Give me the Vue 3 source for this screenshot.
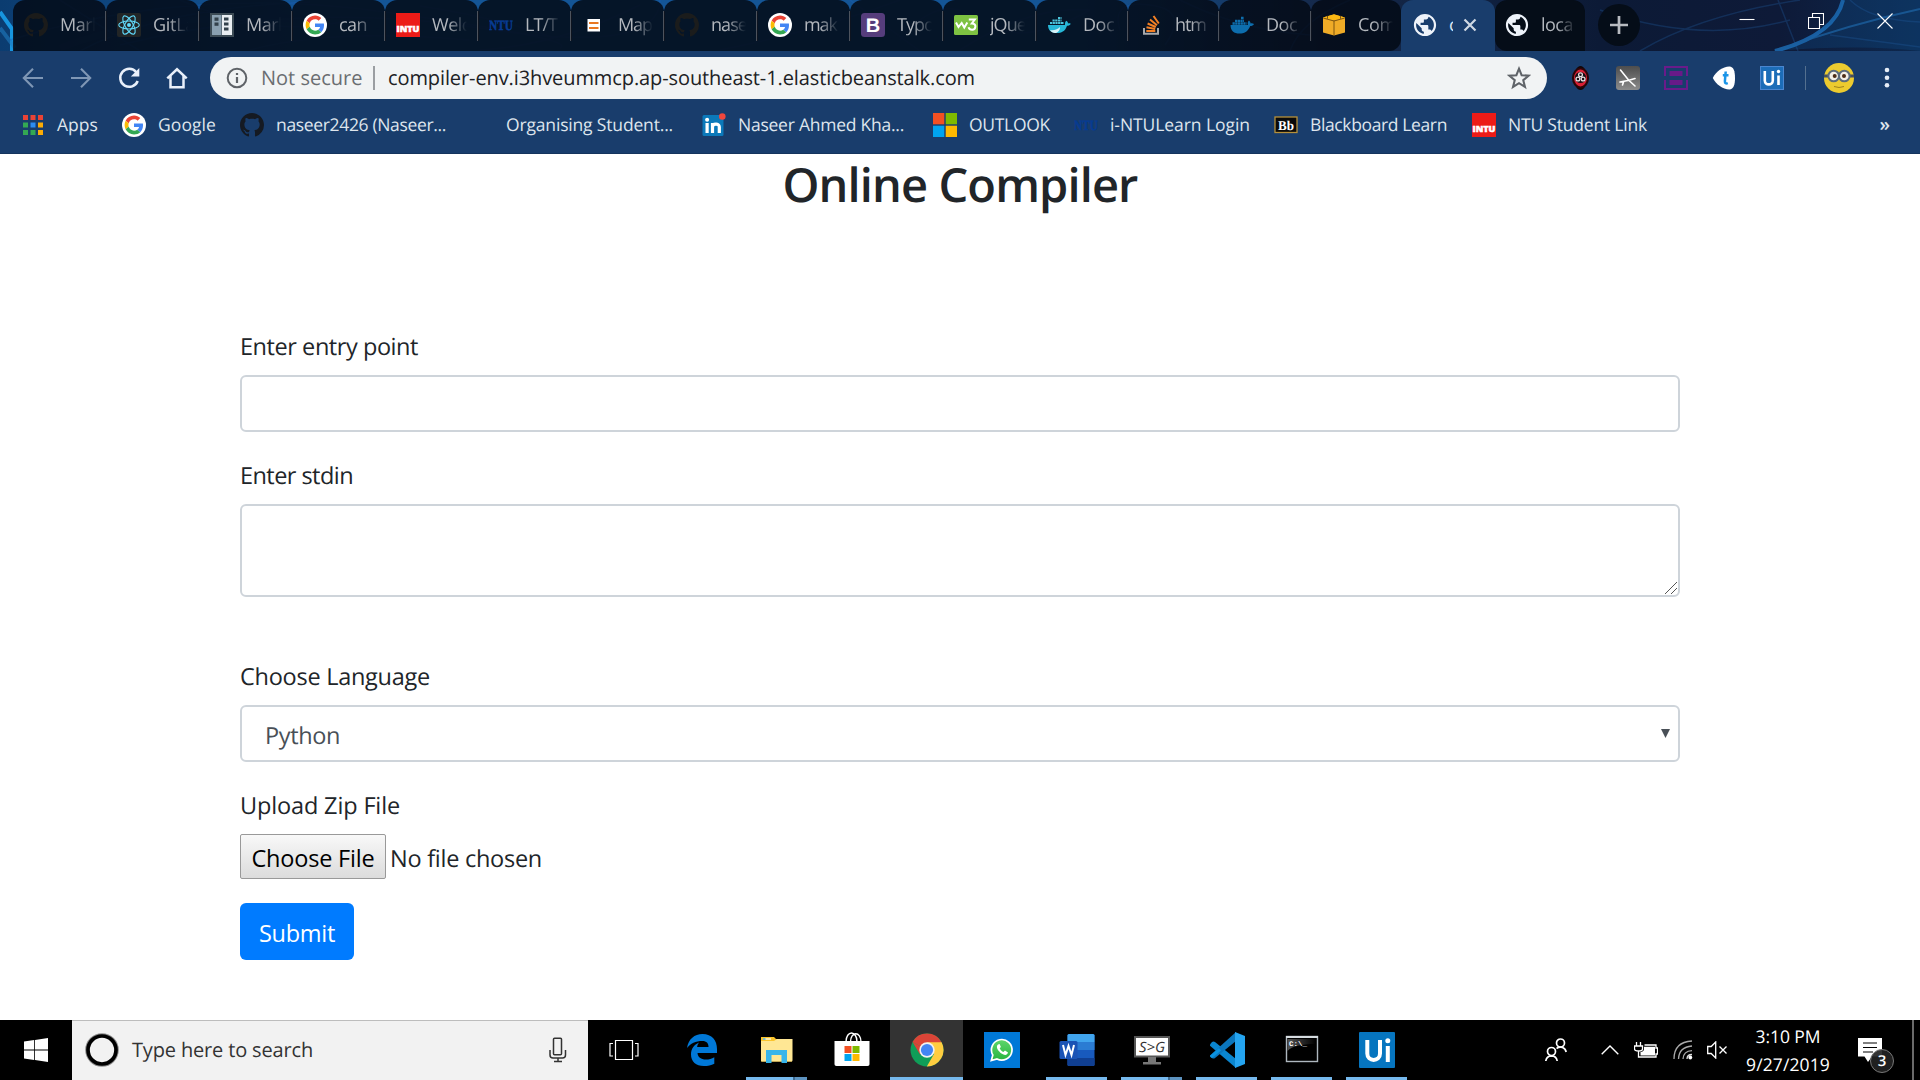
<script setup>
// v-fit adjusts letter spacing so that a run of text spans the given width
const vFit = {
  mounted(el, { value }) {
    if (!value) return
    const natural = el.getBoundingClientRect().width
    el.style.letterSpacing = (value - natural) / el.textContent.length + 'px'
  },
}

// lettering that sits on top of some icons
const lettering = {
  ntured: { text: 'INTU', x: 0.5, y: 18.5, textLength: 23, 'font-weight': 800, 'font-size': 8.5, fill: '#fff', stroke: '#fff', 'stroke-width': 0.5 },
  ntu: { text: 'NTU', x: 0, y: 16.7, textLength: 24, 'font-family': 'Liberation Serif, serif', 'font-weight': 700, 'font-size': 14, fill: '#073b91', stroke: '#073b91', 'stroke-width': 0.5 },
  bootstrap: { text: 'B', x: 4.8, y: 18.8, textLength: 14.5, 'font-family': 'Liberation Sans, sans-serif', 'font-weight': 700, 'font-size': 19.5, fill: '#fff' },
  bb: { text: 'Bb', x: 4, y: 16.5, textLength: 16, 'font-family': 'Liberation Serif, serif', 'font-weight': 700, 'font-size': 13.5, fill: '#fff' },
  sg: { text: 'S>G', x: 5, y: 20, textLength: 26, 'font-style': 'italic', 'font-size': 14, fill: '#333' },
  cmd: { text: 'C:\\_', x: 5, y: 13.5, textLength: 18, 'font-family': 'Liberation Mono, monospace', 'font-weight': 700, 'font-size': 7, fill: '#fff' },
}
const letterAttrs = (icon) => {
  const { text, ...attrs } = lettering[icon]
  return attrs
}

const tabs = [
  { icon: 'github', text: 'Mark', w: 93, fit: 41 },
  { icon: 'react', text: 'GitLa', w: 93, fit: 42 },
  { icon: 'panel', text: 'Mark', w: 93, fit: 41 },
  { icon: 'google', text: 'can', w: 93, fit: 28 },
  { icon: 'ntured', text: 'Welc', w: 93, fit: 38 },
  { icon: 'ntu', text: 'LT/T', w: 93, fit: 32 },
  { icon: 'map', text: 'Map', w: 93, fit: 34 },
  { icon: 'github', text: 'nase', w: 93, fit: 36 },
  { icon: 'google', text: 'mak', w: 93, fit: 33 },
  { icon: 'bootstrap', text: 'Typo', w: 93, fit: 37 },
  { icon: 'w3', text: 'jQue', w: 93, fit: 36 },
  { icon: 'docker', text: 'Doc', w: 92, fit: 31 },
  { icon: 'stack', text: 'htm', w: 91, fit: 31 },
  { icon: 'dockerflat', text: 'Doc', w: 92, fit: 31 },
  { icon: 'aws', text: 'Com', w: 90, fit: 38 },
]

const bookmarks = [
  { icon: 'apps', text: 'Apps', w: 101, fit: 41 },
  { icon: 'google', text: 'Google', w: 118, fit: 58 },
  { icon: 'github', text: 'naseer2426 (Naseer...', w: 230, fit: 170 },
  { icon: '', text: 'Organising Student...', w: 232, fit: 167 },
  { icon: 'linkedin', text: 'Naseer Ahmed Kha...', w: 231, fit: 166 },
  { icon: 'microsoft', text: 'OUTLOOK', w: 141, fit: 81 },
  { icon: 'ntu', text: 'i-NTULearn Login', w: 200, fit: 140 },
  { icon: 'bb', text: 'Blackboard Learn', w: 198, fit: 137 },
  { icon: 'ntured', text: 'NTU Student Link', w: 200, fit: 139 },
]

const extensions = ['ladybug', 'plane', 'frames', 'tee', 'uipath']

const pinned = [
  { icon: 'taskview', state: '' },
  { icon: 'edge', state: '' },
  { icon: 'explorer', state: 'open multi' },
  { icon: 'store', state: '' },
  { icon: 'chrome', state: 'open current' },
  { icon: 'whatsapp', state: '' },
  { icon: 'word', state: 'open' },
  { icon: 'sg', state: 'open multi' },
  { icon: 'vscode', state: 'open' },
  { icon: 'cmd', state: 'open' },
  { icon: 'uitask', state: 'open' },
]
</script>

<template>
  <div class="screen">
    <svg class="defs" aria-hidden="true">
      <defs>
        <linearGradient id="gGrey" x1="0" y1="0" x2="0" y2="1"><stop offset="0" stop-color="#4d4d4d" /><stop offset="1" stop-color="#8c8c8c" /></linearGradient>
        <linearGradient id="gGreen" x1="0" y1="0" x2="0" y2="1"><stop offset="0" stop-color="#5fd66c" /><stop offset="1" stop-color="#27b43f" /></linearGradient>
        <linearGradient id="gCmd" x1="0" y1="0" x2="1" y2="0"><stop offset="0" stop-color="#555" /><stop offset="1" stop-color="#000" /></linearGradient>
      </defs>
      <symbol id="github" viewBox="0 0 16 16"><path fill="#151a22" fill-rule="evenodd" d="M8 0C3.58 0 0 3.58 0 8c0 3.54 2.29 6.53 5.47 7.59.4.07.55-.17.55-.38 0-.19-.01-.82-.01-1.49-2.01.37-2.53-.49-2.69-.94-.09-.23-.48-.94-.82-1.13-.28-.15-.68-.52-.01-.53.63-.01 1.08.58 1.23.82.72 1.21 1.87.87 2.33.66.07-.52.28-.87.51-1.07-1.78-.2-3.64-.89-3.64-3.95 0-.87.31-1.59.82-2.15-.08-.2-.36-1.02.08-2.12 0 0 .67-.21 2.2.82.64-.18 1.32-.27 2-.27s1.36.09 2 .27c1.53-1.04 2.2-.82 2.2-.82.44 1.1.16 1.92.08 2.12.51.56.82 1.27.82 2.15 0 3.07-1.87 3.75-3.65 3.95.29.25.54.73.54 1.48 0 1.07-.01 1.93-.01 2.2 0 .21.15.46.55.38A8.01 8.01 0 0 0 16 8c0-4.42-3.58-8-8-8z" /></symbol>
      <symbol id="google" viewBox="0 0 24 24">
        <circle cx="12" cy="12" r="12" fill="#fff" />
        <g transform="translate(2.6 2.6) scale(.392)">
          <path fill="#ea4335" d="M24 9.5c3.54 0 6.71 1.22 9.21 3.6l6.85-6.85C35.9 2.38 30.47 0 24 0 14.62 0 6.51 5.38 2.56 13.22l7.98 6.19C12.43 13.72 17.74 9.5 24 9.5z" />
          <path fill="#4285f4" d="M46.98 24.55c0-1.57-.15-3.09-.38-4.55H24v9.02h12.94c-.58 2.96-2.26 5.48-4.78 7.18l7.73 6c4.51-4.18 7.09-10.36 7.09-17.65z" />
          <path fill="#fbbc05" d="M10.53 28.59c-.48-1.45-.76-2.99-.76-4.59s.27-3.14.76-4.59l-7.98-6.19C.92 16.46 0 20.12 0 24s.92 7.54 2.56 10.78z" />
          <path fill="#34a853" d="M24 48c6.48 0 11.93-2.13 15.89-5.81l-7.73-6c-2.15 1.45-4.92 2.3-8.16 2.3-6.26 0-11.57-4.22-13.47-9.91l-7.98 6.19C6.51 42.62 14.62 48 24 48z" />
        </g>
      </symbol>
      <symbol id="react" viewBox="0 0 24 24">
        <rect width="24" height="24" rx="2" fill="#222526" />
        <g fill="none" stroke="#61dafb" stroke-width="1.1"><ellipse cx="12" cy="12" rx="10.3" ry="4" /><ellipse cx="12" cy="12" rx="10.3" ry="4" transform="rotate(60 12 12)" /><ellipse cx="12" cy="12" rx="10.3" ry="4" transform="rotate(120 12 12)" /></g>
        <circle cx="12" cy="12" r="2" fill="#61dafb" />
      </symbol>
      <symbol id="panel" viewBox="0 0 24 24">
        <rect width="24" height="24" fill="#3c4b55" /><rect x="2" y="2" width="9.5" height="20" fill="#8aa0b0" /><rect x="12" y="2" width="10" height="20" fill="#e9eef2" />
        <g fill="#33414b"><rect x="4.5" y="4.5" width="4" height="3.3" /><rect x="4.5" y="9.5" width="4" height="3.3" /><rect x="14" y="4.5" width="4.5" height="3" /><rect x="14" y="9.5" width="4.5" height="3" /><rect x="14" y="14.5" width="4.5" height="3" /></g>
      </symbol>
      <symbol id="ntured" viewBox="0 0 24 24"><rect width="24" height="24" fill="#ec1b17" /></symbol>
      <symbol id="map" viewBox="0 0 24 24"><rect x="5.5" y="6" width="12.5" height="12.5" fill="#fff" /><path d="M7 10h9.5M7 15h9.5" stroke="#e87722" stroke-width="2.2" /></symbol>
      <symbol id="bootstrap" viewBox="0 0 24 24"><rect width="24" height="24" rx="3.5" fill="#563d7c" /></symbol>
      <symbol id="w3" viewBox="0 0 24 24"><rect y="2" width="24" height="20" rx="1.5" fill="#7ec242" /><path d="M2 9.5l2.5 4.5 3.2-4 2.6 4.5 3-5" fill="none" stroke="#fff" stroke-width="2" /><path d="M14.8 6.5h6l-3 4c5.5 0 4 6.5.2 6.3-2 0-3-1-3.5-2.5" fill="none" stroke="#fff" stroke-width="2" /></symbol>
      <symbol id="docker" viewBox="0 0 24 24"><path d="M1 12h17c0-2 0-3 1.2-4.2C20.5 8.5 21 9.4 21 10.4c1-.3 2-.1 2.700.3-.6 1.500-2 2-3.700 2C18 18.600 14.300 20 10 20 5 20 1 18 1 12z" fill="#27b8d8" /><path d="M3 17c4 .8 8-1 10-3 0 4-3 6-5 6-2 0-4-1-5-3z" fill="#d8f2f7" /><path d="M3 10h14M5.5 7.500h9M11 5h3.500" stroke="#4bc5dc" stroke-width="2.200" stroke-dasharray="2.200 .5" /></symbol>
      <symbol id="dockerflat" viewBox="0 0 24 24"><path d="M.5 12H18c-.7-2-.2-3.500 1-4.500 1 .8 1.600 2 1.600 3 1.200-.3 2.400-.1 3.400.4-.8 1.500-2 2-3.800 2C18 18.600 14 20.500 9.500 20.500 4 20.500.5 18 .5 12z" fill="#0d6eae" /><path d="M2.500 10.500h14M5 7.800h9M11 5h3" stroke="#0d6eae" stroke-width="2.300" stroke-dasharray="2.300 .4" /></symbol>
      <symbol id="stack" viewBox="0 0 24 24"><path d="M5 15v5.800h14V15" fill="none" stroke="#a7a9ac" stroke-width="2" /><g stroke="#f48024" stroke-width="2"><path d="M7.300 18h9M7.500 14.300l8.700 1.600M8.600 10.500l8.200 3.500M11 6.500l7 5.700M14.500 3l5.300 7.500" /></g></symbol>
      <symbol id="aws" viewBox="0 0 24 24"><path d="M1 4.500L12 1.500l11 3V19.500l-11 3-11-3z" fill="#efab27" /><path d="M1 4.500l11-3.200 11 3.200-11 3z" fill="#fcb813" /><path d="M12 7.500V22.300M1.200 5L12 8l10.800-3M5.500 2.800v3M18.500 2.800v3" stroke="#7d5410" stroke-width="1" fill="none" /></symbol>
      <symbol id="globe" viewBox="1.200 1.200 21.600 21.600"><path fill="#eef3fa" d="M12 2C6.480 2 2 6.480 2 12s4.480 10 10 10 10-4.480 10-10S17.520 2 12 2zm-1 17.930c-3.950-.49-7-3.850-7-7.930 0-.62.080-1.210.21-1.790L9 15v1c0 1.100.9 2 2 2v1.930zm6.900-2.540c-.26-.81-1-1.390-1.900-1.390h-1v-3c0-.55-.45-1-1-1H8v-2h2c.55 0 1-.45 1-1V7h2c1.100 0 2-.9 2-2v-.41c2.930 1.190 5 4.060 5 7.410 0 2.080-.8 3.970-2.100 5.390z" /></symbol>
      <symbol id="apps" viewBox="0 0 24 24"><path fill="#ea4335" d="M2 2h5v5H2zM9.500 2h5v5h-5zM17 2h5v5h-5z" /><path fill="#34a853" d="M2 9.500h5v5H2zM2 17h5v5H2zM9.500 17h5v5h-5z" /><path fill="#2d8cf0" d="M9.500 9.500h5v5h-5z" /><path fill="#fbac05" d="M17 9.500h5v5h-5zM17 17h5v5h-5z" /></symbol>
      <symbol id="linkedin" viewBox="0 0 24 24"><rect x=".5" y="2" width="21" height="21" rx="1.500" fill="#0b79ba" /><rect x="3.500" y="10" width="3.200" height="10" fill="#fff" /><circle cx="5.100" cy="6.700" r="2" fill="#fff" /><path d="M10.500 20V10M10.500 14c0-3.500 6.800-4 6.800 0v6" fill="none" stroke="#fff" stroke-width="3.200" /><circle cx="20.300" cy="3.500" r="3.300" fill="#f0463c" /></symbol>
      <symbol id="microsoft" viewBox="0 0 24 24"><path fill="#f25022" d="M0 0h11.300v11.300H0z" /><path fill="#7fba00" d="M12.700 0H24v11.300H12.700z" /><path fill="#00a4ef" d="M0 12.700h11.300V24H0z" /><path fill="#ffb900" d="M12.700 12.700H24V24H12.700z" /></symbol>
      <symbol id="bb" viewBox="0 0 24 24"><rect x="1" y="4" width="22" height="15.500" fill="#0a0a0a" stroke="#b5903a" stroke-width="1.300" /></symbol>
      <symbol id="ladybug" viewBox="0 0 24 24"><ellipse cx="12.500" cy="12" rx="6.500" ry="12" fill="#120607" /><ellipse cx="12.500" cy="12" rx="7.500" ry="9.500" fill="#d91f34" stroke="#2a0508" /><circle cx="12.500" cy="11.500" r="5.500" fill="#151015" /><g fill="none" stroke="#e8dde0" stroke-width="1.300"><circle cx="12.500" cy="8.700" r="1.900" /><circle cx="9.900" cy="13" r="1.900" /><circle cx="15.100" cy="13" r="1.900" /></g></symbol>
      <symbol id="plane" viewBox="0 0 24 24"><rect width="24" height="24" rx="3" fill="url(#gGrey)" /><path d="M4.500 4l8 10L19 20M4 16l8-1.500 7-2M7.500 16l-1 3" stroke="#fff" stroke-width="1.600" fill="none" stroke-linecap="round" /></symbol>
      <symbol id="frames" viewBox="0 0 24 24"><g fill="none" stroke="#6a1b8a" stroke-width="2"><path d="M1 10V1h22v9M1 14v9h22v-9" /></g><path d="M5.500 5h13v5h-13zM5.500 14h13v5h-13z" fill="#681a88" /></symbol>
      <symbol id="tee" viewBox="0 0 24 24"><path d="M.8 12C4 5.500 11 .5 17.500 .6c4 .2 5.500 4.400 5.500 11.400s-1.500 11.200-5.500 11.400C11 23.500 4 18.500.8 12z" fill="#fff" /><path d="M13.700 5.500l-.8 9.700c-.1 2 1 2.600 2.900 1.900M10.800 9.300h5.700" stroke="#1b95e8" stroke-width="2.500" fill="none" /></symbol>
      <symbol id="uipath" viewBox="0 0 24 24"><rect width="24" height="24" fill="#1c6db8" stroke="#4a86d0" /><path d="M4.800 5v9.500c0 5.200 8 5.200 8 0V5M18.500 9.500V19" fill="none" stroke="#fff" stroke-width="2.600" /><circle cx="18.500" cy="5.500" r="1.700" fill="#fff" /></symbol>

      <symbol id="taskview" viewBox="0 0 36 36"><path d="M9.500 8.500h17v19h-17zM7 11.500H4v12.500h3M29 11.500h3v12.500h-3" fill="none" stroke="#fff" stroke-width="1.200" /></symbol>
      <symbol id="edge" viewBox="0 0 36 36"><path fill="#0078d7" d="M3 16C4.500 7 10.500 2 18.500 2 28 2 33 8.500 33 17v4H13.500c.3 4.200 3.500 6.500 8.300 6.500 3.200 0 6-.8 8.500-2.300v6.500c-3 1.600-6.500 2.300-10.500 2.300C12 34 7 29.500 7 22.500c0-5.500 3-9.800 8-12-1.200 1.600-1.700 3-1.900 4.500h11.400c0-3.800-2-6-6-6C11.500 9 6.500 11.500 3 16z" /></symbol>
      <symbol id="explorer" viewBox="0 0 36 36"><path d="M2 5h13l2 2h16v22.500H2z" fill="#fbc52d" /><path d="M2 9h13l3-2h15.500v21c0 1-.5 1.500-1.500 1.500H3.500c-1 0-1.500-.5-1.500-1.500z" fill="#ffe794" /><path d="M4 7h8" stroke="#fff" stroke-width="1.200" /><path d="M4 7h2.500" stroke="#25a3e0" stroke-width="1.200" /><path d="M7 18h21v13h-5.500v-8h-10v8H7z" fill="#38b5ea" /></symbol>
      <symbol id="store" viewBox="0 0 36 36"><path d="M12 10c0-12 11-12 11 0M16.500 10c0-11 10.500-11 10.500 0" fill="none" stroke="#fff" stroke-width="1.400" /><path d="M.5 9h35v23c0 1.300-.7 2-2 2H2.500c-1.300 0-2-.7-2-2z" fill="#fff" /><path fill="#f25022" d="M10.500 14h7v7h-7z" /><path fill="#7fba00" d="M18.500 14h7v7h-7z" /><path fill="#00a4ef" d="M10.500 22h7v7h-7z" /><path fill="#ffb900" d="M18.500 22h7v7h-7z" /></symbol>
      <symbol id="chrome" viewBox="0 0 36 36"><circle cx="18" cy="18" r="16.500" fill="#0f9d58" /><path d="M18 18l-14.500-8A16.700 16.700 0 0 1 32.600 10.200z" fill="#db4437" /><path d="M18 10.200h14.600A16.500 16.500 0 0 1 17.800 34.500L25 22z" fill="#ffcd40" /><path d="M18 18L3.500 10 11 22.500z" fill="#db4437" /><circle cx="18" cy="18" r="7.700" fill="#f1f1f1" /><circle cx="18" cy="18" r="6.100" fill="#4285f4" /></symbol>
      <symbol id="whatsapp" viewBox="0 0 36 36"><rect width="36" height="36" fill="#0078d7" /><path d="M7.300 28.500l1.500-5.500A10.300 10.300 0 1 1 13 27z" fill="url(#gGreen)" stroke="#fff" stroke-width="1.700" /><path d="M14 12.500c-3 2.500.7 7 3.500 9 3 2 5.700 2 6.500-1l-3-2-1.700 1.500c-2-1-3-2.200-3.600-3.700l1.200-1.300-1.300-3z" fill="#fff" /></symbol>
      <symbol id="word" viewBox="0 0 36 36"><rect x="8.500" y="2" width="27" height="32" rx="1.500" fill="#185abd" /><path d="M10 2h24q1.500 0 1.500 1.500V10h-27V3.500Q8.500 2 10 2z" fill="#41a5ee" /><path d="M8.500 10h27v8h-27z" fill="#2b7cd3" /><path d="M8.500 26h27v6.500q0 1.500-1.500 1.500H10q-1.500 0-1.500-1.500z" fill="#103f91" /><rect x=".5" y="9" width="18" height="18" rx="1.500" fill="#1a53b5" /><path d="M4 13l2.500 10L9.500 14l3 9L15 13" fill="none" stroke="#fff" stroke-width="2" /></symbol>
      <symbol id="sg" viewBox="0 0 36 36"><rect x="1" y="5" width="34" height="19.500" fill="#fff" stroke="#555" stroke-width="2" /><path d="M14 25h8v5h5v2.500H9V30h5z" fill="#777" /></symbol>
      <symbol id="vscode" viewBox="0 0 36 36"><path d="M1 12.500L3 10c1-.8 2-.7 3 0L27 27v9L1 13.800z" fill="#0a86d0" /><path d="M1 23.500L27 0v9L6 26c-1 .8-2 .7-3 0l-2-1.800z" fill="#0b76bd" /><path d="M26 0l10 4v28l-10 4z" fill="#24a4f0" /><path d="M12 18.500l-4 3.500L3 26c-1.500-.6-2-1.300-2-2.200L10 16z" fill="#0a92e0" /></symbol>
      <symbol id="cmd" viewBox="0 0 36 36"><rect x="2.500" y="4.500" width="31" height="25" fill="#000" stroke="#aeb7bf" stroke-width="1.400" /><path d="M2 5h32" stroke="#d6dce0" stroke-width="2" /><path d="M3.500 7h28v5C18 12 8 14 3.500 19z" fill="url(#gCmd)" /></symbol>
      <symbol id="uitask" viewBox="0 0 36 36"><rect width="36" height="36" rx="1" fill="#0675bf" /><path d="M8.300 8v13.500c0 8.500 12.700 8.500 12.700 0V8M28.800 14v16" fill="none" stroke="#fff" stroke-width="4" /><circle cx="28.800" cy="8.700" r="2.500" fill="#fff" /></symbol>
    </svg>

    <header class="tabstrip">
      <svg class="wallpaper" viewBox="0 0 1920 51" preserveAspectRatio="none">
        <g fill="none">
          <path d="M0 12l12 17v22" stroke="#1795df" stroke-width="4" /><path d="M0 28l15 20" stroke="#1f7cc0" stroke-width="4" opacity=".6" />
          <g stroke="#1a5fb8" opacity=".38" stroke-width="1.500">
            <path d="M10 40Q190-15 385 12T560 48M60 0l80 51M80 51Q160 8 310 2M120 45Q300 0 480 28T660 0M480 50Q560 45 640 5M250 50Q330 28 470 40M180 0q90 40 170 20M420 6q80 12 140 34M720 50Q820 30 900 0M900 40q40-50 80-20t110-10M960 50q70-45 130-40M1120 30q-10-30 30-25t15 40M1180 0q60 30 130 35M1290 51q10-30 60-51M850 0l70 51" />
          </g>
          <g stroke="#19539a" opacity=".22" stroke-width="7"><path d="M60 48Q180 0 400 28M420 15Q500 25 650 0M880 40Q970 0 1040 20" /></g>
          <path d="M1843 0Q1835 35 1775 51Q1860 44 1920 51V0z" fill="#10528f" opacity=".28" />
          <path d="M1775 51Q1835 35 1843 0" stroke="#1d6fba" stroke-width="4" opacity=".8" /><path d="M1775 51Q1850 24 1920 9" stroke="#1c5f9e" stroke-width="2" opacity=".8" />
          <path d="M1778 0l20 51M1600 10q100 35 190 10M1830 35l90 12M1850 0q20 20 70 22M1640 51Q1700 15 1800 0" stroke="#225fa6" opacity=".3" stroke-width="1.500" />
        </g>
      </svg>
      <div class="tabs">
        <div v-for="(t, i) in tabs" :key="i" class="tab" :class="{ last: i === 14 }" :style="{ width: t.w + 'px' }">
          <svg class="fav" :class="t.icon" viewBox="0 0 24 24"><use :href="'#' + t.icon" /><text v-if="lettering[t.icon]" v-bind="letterAttrs(t.icon)" lengthAdjust="spacingAndGlyphs">{{ lettering[t.icon].text }}</text></svg>
          <div class="title"><span v-fit="t.fit">{{ t.text }}</span></div>
        </div>
        <div class="tab active">
          <svg class="fav"><use href="#globe" /></svg>
          <div class="title sliver"><span>c</span></div>
          <svg class="close" viewBox="0 0 14 14"><path d="M1.500 1.500l11 11M12.500 1.500l-11 11" stroke="#cfd8e3" stroke-width="2.200" /></svg>
        </div>
        <div class="tab after">
          <svg class="fav"><use href="#globe" /></svg>
          <div class="title"><span v-fit="32">loca</span></div>
        </div>
        <div class="plus"><svg viewBox="0 0 18 18"><path d="M9 0v18M0 9h18" stroke="#b8bbc0" stroke-width="2.700" /></svg></div>
      </div>
      <div class="controls">
        <svg viewBox="0 0 16 16"><path d="M.5 6.500h15" /></svg>
        <svg viewBox="0 0 16 16"><path d="M.5 4.500h11v11H.5zM4.500 4.500v-4h11v11h-4" /></svg>
        <svg viewBox="0 0 16 16"><path d="M.5.5l15 15M15.500.5l-15 15" /></svg>
      </div>
    </header>

    <nav class="toolbar">
      <div class="cell"><svg viewBox="0 0 24 24" class="dim"><path d="M22 12H3.500M12 2.800L2.800 12l9.200 9.200" /></svg></div>
      <div class="cell"><svg viewBox="0 0 24 24" class="dim"><path d="M2 12h18.500M12 2.800l9.200 9.200-9.200 9.200" /></svg></div>
      <div class="cell"><svg viewBox="0 0 24 24"><path d="M19.300 6.200A9 9 0 1 0 20.700 15" stroke-width="2.500" /><path d="M22.300 2v8.500h-8.500z" fill="#e9f0fa" stroke="none" /></svg></div>
      <div class="cell"><svg viewBox="0 0 24 24"><path d="M2.300 12.300L12 3.300l9.700 9M5.500 10v11.300h13V10" stroke-width="2.500" /></svg></div>
      <div class="omnibox">
        <svg class="info" viewBox="0 0 22 22"><circle cx="11" cy="11" r="9.300" fill="none" stroke="#5f6368" stroke-width="2" /><path d="M11 10v6M11 6v2" stroke="#5f6368" stroke-width="2.200" /></svg>
        <span class="secure" v-fit="101">Not secure</span>
        <i class="bar"></i>
        <span class="url" v-fit="587">compiler-env.i3hveummcp.ap-southeast-1.elasticbeanstalk.com</span>
        <svg class="star" viewBox="0 0 22 22"><path d="M11 2.500l2.400 5.900 6.400.5-4.900 4.100 1.600 6.200-5.500-3.400-5.500 3.400 1.600-6.200L2.200 8.900l6.400-.5z" fill="none" stroke="#5f6368" stroke-width="1.900" /></svg>
      </div>
      <div class="exts">
        <div v-for="e in extensions" :key="e" class="cell"><svg class="ext"><use :href="'#' + e" /></svg></div>
      </div>
      <i class="divider"></i>
      <svg class="avatar" viewBox="0 0 30 30"><circle cx="15" cy="15" r="15" fill="#eccb2f" /><path d="M0 11.500h30v3H0z" fill="#46505c" /><circle cx="9.700" cy="13" r="5.300" fill="#f4f0e6" stroke="#5d6c7a" stroke-width="2" /><circle cx="20.300" cy="13" r="5.300" fill="#f4f0e6" stroke="#5d6c7a" stroke-width="2" /><circle cx="10.700" cy="13" r="2" fill="#4b2d18" /><circle cx="20" cy="13" r="2" fill="#4b2d18" /><path d="M10 23.500q5 2 10 0" stroke="#9e831c" fill="none" /></svg>
      <svg class="menu" viewBox="0 0 6 22"><g fill="#e6edf6"><circle cx="3" cy="3" r="2.300" /><circle cx="3" cy="10.700" r="2.300" /><circle cx="3" cy="18.200" r="2.300" /></g></svg>
    </nav>

    <nav class="bookmarks">
      <div v-for="b in bookmarks" :key="b.text" class="bookmark" :style="{ width: b.w + 'px' }">
        <svg class="bicon" viewBox="0 0 24 24"><use v-if="b.icon" :href="'#' + b.icon" /><text v-if="lettering[b.icon]" v-bind="letterAttrs(b.icon)" lengthAdjust="spacingAndGlyphs">{{ lettering[b.icon].text }}</text></svg>
        <span v-fit="b.fit">{{ b.text }}</span>
      </div>
      <span class="more">»</span>
    </nav>

    <main class="page">
      <h2><span v-fit="355">Online Compiler</span></h2>
      <form class="form" @submit.prevent>
        <label><span v-fit="178">Enter entry point</span></label>
        <input class="control" type="text" />
        <label><span v-fit="113">Enter stdin</span></label>
        <div class="control area">
          <svg viewBox="0 0 14 14"><path d="M1 13L13 1M7 13l6-6" stroke="#555" stroke-width="1" /></svg>
        </div>
        <label><span v-fit="190">Choose Language</span></label>
        <div class="control select">
          <span v-fit="75">Python</span>
          <svg viewBox="0 0 9 9"><path d="M0 0h9L4.500 9z" fill="#495057" /></svg>
        </div>
        <label><span v-fit="160">Upload Zip File</span></label>
        <div class="file">
          <button type="button" class="choose"><span v-fit="123">Choose File</span></button>
          <span class="none" v-fit="152">No file chosen</span>
        </div>
        <button type="button" class="submit"><span v-fit="76">Submit</span></button>
      </form>
    </main>

    <footer class="taskbar">
      <div class="start"><svg viewBox="0 0 24 24"><path fill="#fff" d="M0 3.400L10.200 2v9.500H0zM11 1.900L24 0v11.500H11zM0 12.500h10.200V22L0 20.600zM11 12.500h13V24l-13-1.900z" /></svg></div>
      <div class="search">
        <svg class="ring" viewBox="0 0 34 34"><circle cx="17" cy="17" r="15.300" fill="none" stroke="#8b8b8b" stroke-width="3" /><circle cx="17" cy="17" r="14" fill="none" stroke="#000" stroke-width="3.700" /></svg>
        <span v-fit="181">Type here to search</span>
        <svg class="mic" viewBox="0 0 18 26"><path d="M4.500 2.200q0-1 1-1h6q1 0 1 1v14.600q0 1-1 1h-6q-1 0-1-1zM1 13v5q0 3 3 3h9.500q3 0 3-3v-5M9 21v3M5 24.500h8" fill="none" stroke="#333" stroke-width="1.500" /></svg>
      </div>
      <div class="pins">
        <div v-for="p in pinned" :key="p.icon" class="pin" :class="[p.icon, p.state]"><svg viewBox="0 0 36 36"><use :href="'#' + p.icon" /><text v-if="lettering[p.icon]" v-bind="letterAttrs(p.icon)" lengthAdjust="spacingAndGlyphs">{{ lettering[p.icon].text }}</text></svg></div>
      </div>
      <div class="tray">
        <svg class="people" viewBox="0 0 22 24"><g fill="none" stroke="#fff" stroke-width="1.700"><circle cx="15.500" cy="5" r="4" /><circle cx="6.500" cy="13.500" r="4" /><path d="M.8 23q.7-5 5.700-5.200 5 .2 5.700 5.200M11.500 10.500q3-2 6-1 3 1 3.700 4.500" /></g></svg>
        <svg class="chev" viewBox="0 0 18 10"><path d="M.7 9.300L9 1l8.300 8.300" fill="none" stroke="#fff" stroke-width="1.400" /></svg>
        <svg class="batt" viewBox="0 0 24 18"><path d="M2.500 1v4M6.500 1v4M.5 5h8v3q0 2-4 2-4 0-4-2zM4.500 10v6H22v-3h1.500V7H22V4H10.500" fill="none" stroke="#fff" stroke-width="1.300" /><path d="M10 5.700h11V14.500H6.500V11Q10 10.500 10 8z" fill="#fff" /></svg>
        <svg class="wifi" viewBox="0 0 20 20"><g fill="none" stroke="#aaa" stroke-width="1.300"><path d="M1 19Q1 2 19 1M5.500 19Q6 7 19 6M10 19q.5-8 9-8.300" /><path d="M14 19q0-4.500 5-4.500" stroke="#ddd" /></g><circle cx="17.300" cy="17.500" r="1.900" fill="#fff" /></svg>
        <svg class="vol" viewBox="0 0 20 18"><path d="M.7 5.500h3.500L8.700 1v16l-4.500-4.500H.7zM12.500 5.500l7 7M19.500 5.500l-7 7" fill="none" stroke="#fff" stroke-width="1.300" /></svg>
        <div class="clock"><div><span v-fit="65">3:10 PM</span></div><div><span v-fit="84">9/27/2019</span></div></div>
        <div class="notes">
          <svg viewBox="0 0 24 24"><path d="M0 0h24v18.500H14L10 24l-3.500-5.500H0z" fill="#fff" /><path d="M5 5h14M5 9.500h14M5 14h10" stroke="#000" stroke-width="1" /></svg>
          <b>3</b>
        </div>
        <i class="peek"></i>
      </div>
    </footer>
  </div>
</template>

<style>
body { margin: 0; overflow: hidden; }
</style>

<style scoped>
* { box-sizing: border-box; }
.screen { width: 1920px; height: 1080px; display: flex; flex-direction: column; background: #fff; font-family: "Open Sans", "Noto Sans", sans-serif; text-rendering: geometricPrecision; overflow: hidden; }
.screen span { white-space: pre; }
svg { display: block; flex: none; }
.defs { position: absolute; width: 0; height: 0; }

.tabstrip { position: relative; height: 51px; flex: none; display: flex; justify-content: space-between; background: linear-gradient(90deg, #0b3c70 0, #145596 300px, #145596 1080px, #15294b 1320px, #0c1a36 1600px, #0e1a38 1780px, #0d284e 1920px); }
.wallpaper { position: absolute; inset: 0; width: 1920px; height: 51px; }
.tabs { position: relative; display: flex; padding-left: 13px; }
.tab { position: relative; height: 51px; flex: none; display: flex; align-items: center; padding: 0 0 1px 11px; border-radius: 12px 12px 0 0; background: rgba(4, 10, 22, .86); color: #b4b8be; }
.tab::after { content: ""; position: absolute; right: -1px; top: 11px; width: 2px; height: 30px; background: #4d535d; }
.tab.last { border-radius: 12px 12px 12px 0; }
.tab.last::after, .tab.active::after, .tab.after::after { display: none; }
.fav { width: 24px; height: 24px; }
.fav.github { opacity: .75; filter: sepia(1); }
.title { margin-left: 12px; width: 35px; overflow: hidden; font-size: 18px; line-height: 48px; -webkit-mask-image: linear-gradient(90deg, #000 45%, transparent); mask-image: linear-gradient(90deg, #000 45%, transparent); }
.active { width: 94px; background: #193d6c; border-radius: 12px 12px 0 0; padding-left: 12px; color: #dce6f2; }
.title.sliver { width: 4px; margin-left: 12px; -webkit-mask-image: none; mask-image: none; }
.close { width: 14px; height: 14px; margin-left: 10px; }
.after { width: 90px; padding-left: 10px; background: #050d18; border-radius: 12px 12px 0 12px; }
.plus { margin: 4px 0 0 13px; width: 42px; height: 42px; border-radius: 50%; background: #050d18; display: flex; align-items: center; justify-content: center; }
.plus svg { width: 18px; height: 18px; }
.controls { position: relative; display: flex; gap: 53px; padding: 13px 27px 0 0; }
.controls svg { width: 16px; height: 16px; fill: none; stroke: #fff; stroke-width: 1.1; }

.toolbar { height: 55px; flex: none; display: flex; align-items: center; padding: 0 0 1px 9px; background: #193d6c; }
.cell { width: 48px; display: flex; justify-content: center; }
.cell svg { width: 24px; height: 24px; fill: none; stroke: #e9f0fa; stroke-width: 2.1; }
.cell svg.dim { stroke: #7f97b5; }
.cell svg.ext { stroke: none; }
.omnibox { width: 1337px; height: 42px; margin-left: 9px; border-radius: 21px; background: #f1f3f4; display: flex; align-items: center; padding: 0 16px; font-size: 20px; line-height: 42px; }
.info { width: 22px; height: 22px; }
.secure { margin-left: 13px; width: 101px; color: #6a6d71; }
.bar { width: 2px; height: 24px; margin: 0 13px 0 11px; background: #9b9ea2; }
.url { color: #202124; }
.star { width: 24px; height: 24px; margin-left: auto; }
.exts { display: flex; margin-left: 9px; }
.divider { width: 1px; height: 24px; margin-left: 9px; background: #54708f; }
.avatar { width: 30px; height: 30px; margin-left: 18px; }
.menu { width: 6px; height: 22px; margin-left: 30px; }

.bookmarks { height: 48px; flex: none; display: flex; padding: 7px 30px 0 21px; background: #193d6c; border-bottom: 1px solid #15345d; color: #dee5ed; font-size: 17.5px; line-height: 25px; }
.bookmark { display: flex; align-items: flex-start; gap: 12px; flex: none; }
.bicon { width: 24px; height: 24px; }
.more { margin-left: auto; font-weight: 600; font-size: 19px; line-height: 22px; }

.page { height: 866px; flex: none; color: #212529; }
h2 { margin: 0; height: 173px; padding-top: 1px; text-align: center; font-size: 47px; font-weight: 600; line-height: 58px; }
.form { width: 1440px; margin: 0 auto; display: flex; flex-direction: column; align-items: flex-start; font-size: 23.5px; }
label { height: 36px; line-height: 39px; margin-bottom: 12px; }
.control { width: 1440px; height: 57px; flex: none; margin: 0 0 24px; border: 2px solid #ced4da; border-radius: 6px; background: #fff; outline: none; }
.area { height: 93px; margin-bottom: 60px; display: flex; align-items: flex-end; justify-content: flex-end; padding: 0; }
.area svg { width: 14px; height: 14px; }
.select { display: flex; align-items: center; justify-content: space-between; padding: 3px 8px 0 23px; color: #495057; line-height: 50px; }
.select svg { width: 9px; height: 9px; margin-bottom: 4px; }
.file { display: flex; height: 45px; margin-bottom: 24px; line-height: 49px; }
button { font-family: inherit; font-size: inherit; padding: 0; }
.choose { width: 146px; height: 45px; border: 1px solid #999; border-radius: 2px; background: linear-gradient(#f8f8f8, #dcdcdc); color: #000; line-height: 47px; overflow: hidden; }
.none { margin-left: 4px; }
.submit { width: 114px; height: 57px; border: 0; border-radius: 6px; background: #007bff; color: #fff; line-height: 60px; }

.taskbar { height: 60px; flex: none; display: flex; background: #000; color: #fff; }
.start { width: 72px; display: flex; align-items: center; padding-left: 24px; }
.start svg { width: 24px; height: 24px; }
.search { width: 516px; display: flex; align-items: center; padding: 0 21px 1px 13px; background: #f2f2f2; border-top: 1px solid #bdbdbd; color: #333; font-size: 20px; line-height: 60px; }
.ring { width: 34px; height: 34px; margin-right: 13px; }
.mic { width: 18px; height: 26px; margin-left: auto; }
.pins { display: flex; }
.pin { position: relative; width: 75px; display: flex; align-items: center; justify-content: center; }
.pin.taskview { width: 76px; padding-right: 4px; }
.pin svg { width: 36px; height: 36px; }
.pin.current { background: linear-gradient(#333, #333) center / 73px 100% no-repeat; }
.pin.open::after { content: ""; position: absolute; left: 7px; bottom: 0; width: 61px; height: 3px; background: #76b9ed; }
.pin.current::after { left: 1px; width: 73px; }
.pin.multi::after { background: linear-gradient(90deg, #76b9ed 47px, #3f6b91 47px, #3f6b91 49px, #5d93c0 49px); }
.tray { flex: 1; display: flex; align-items: center; padding-left: 131px; }
.people { width: 22px; height: 24px; }
.chev { width: 18px; height: 10px; margin-left: 34px; }
.batt { width: 24px; height: 18px; margin-left: 15px; }
.wifi { width: 20px; height: 20px; margin-left: 15px; }
.vol { width: 20px; height: 18px; margin-left: 14px; }
.clock { width: 86px; margin-left: 18px; text-align: center; font-size: 17.5px; line-height: 28px; padding-top: 1px; }
.notes { position: relative; margin-left: 27px; }
.notes svg { width: 24px; height: 24px; }
.notes b { position: absolute; left: 12px; top: 11px; width: 24px; height: 24px; border-radius: 50%; border: 1px solid #777; background: rgba(35, 35, 35, .92); font-size: 15px; font-weight: 600; line-height: 22px; text-align: center; }
.peek { width: 2px; height: 60px; margin-left: 30px; background: #6a6a6a; }
</style>
